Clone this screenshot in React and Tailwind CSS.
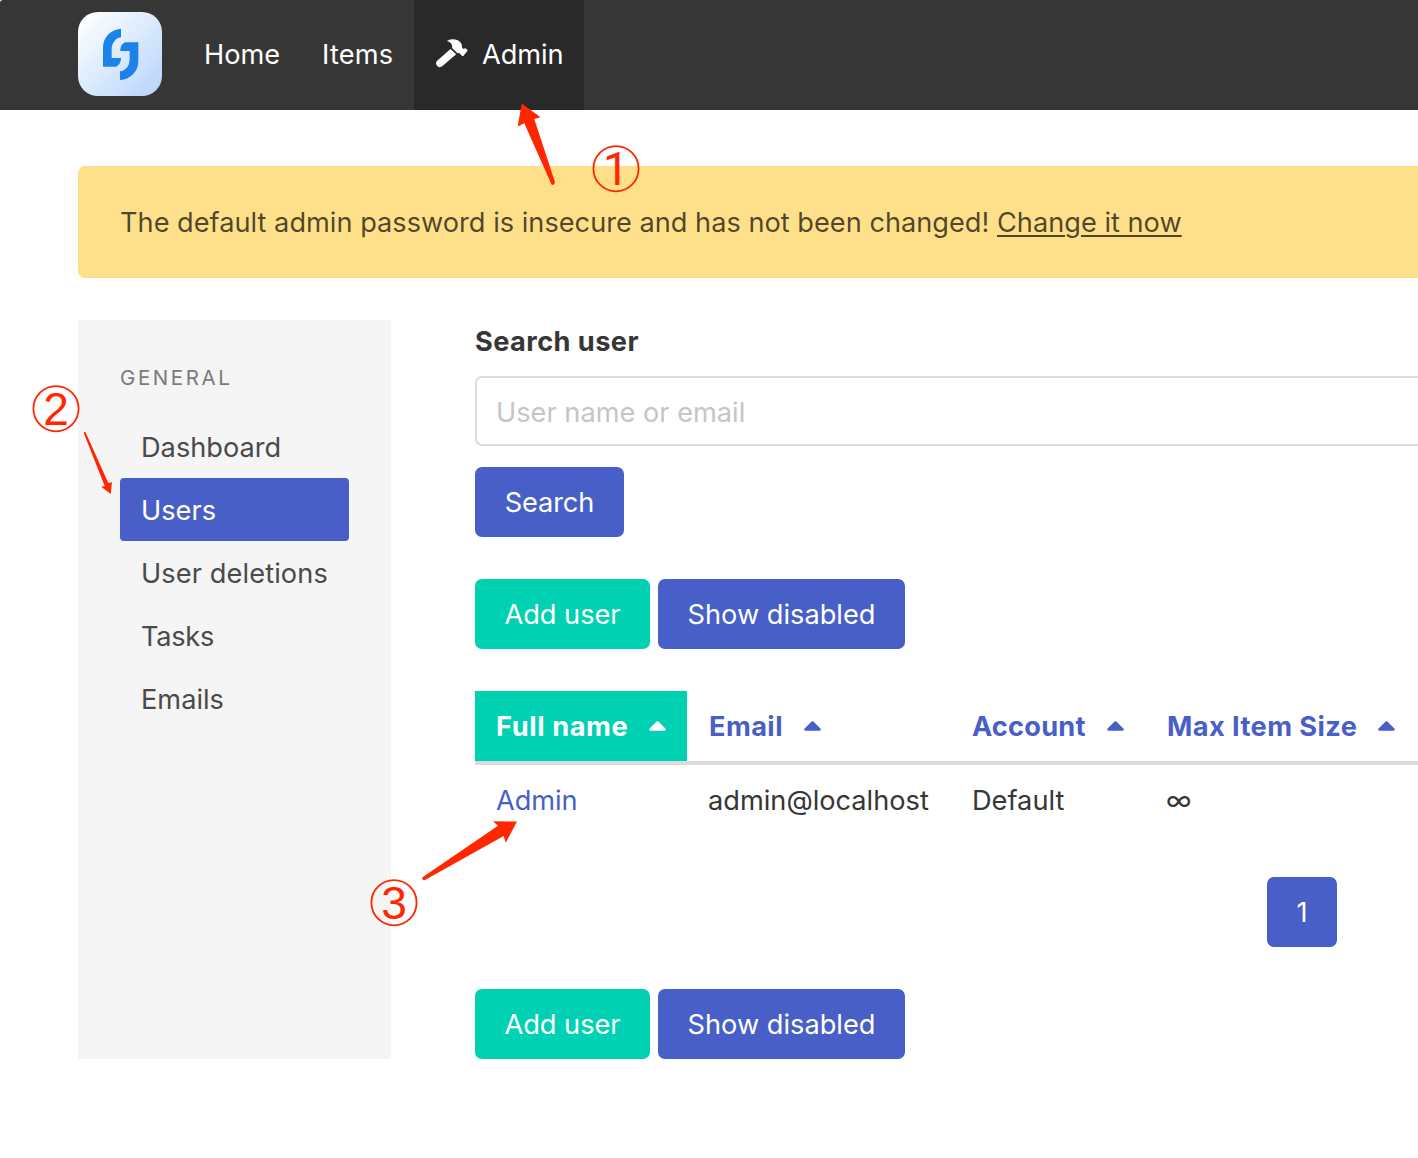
const T = ({ children, className = "" }) => (
  <span className={"whitespace-pre pt-[2px] " + className}>{children}</span>
);

function Logo() {
  return (
    <div className="h-[84px] w-[84px] shrink-0 rounded-[20px] bg-linear-to-br from-white from-5% to-[#b4d3fa]">
      <svg viewBox="0 0 252 252" className="h-full w-full" fill="#1a82e8">
        <path d="M129 50C97 53 75 75 75 108V164H114C122 161 129 152 129 138H101V112C101 95 112 78 129 76Z" />
        <path d="M181 91H143C134 93 127 101 127 117H155V140C155 160 145 176 126 178V204C159 201 181 178 181 146Z" />
      </svg>
    </div>
  );
}

function Hammer() {
  return (
    <svg viewBox="0 0 98 87" className="mb-px mr-[14px] h-[29px] w-[33px]" fill="currentColor">
      <path d="M46 30L63 46L21 82A11.500 11.500 0 0 1 5 66Z" />
      <path d="M36 5C50-2 66 0 75 9C83 17 79 24 82 28Q85 31 89 28Q91 27 93 29L96 32Q98 34 96 37L85 50Q83 52 80 50L76 46Q74 43 71 42L67 43L51 27C52 16 47 9 36 6Z" />
    </svg>
  );
}

function Caret() {
  return (
    <svg viewBox="0 0 17 10" className="h-[10px] w-[17px]" fill="currentColor">
      <path d="M7.600.600a1.300 1.300 0 0 1 1.800 0l7 7c.900.900.300 2.100-.900 2.100h-14C.300 9.700-.300 8.500.600 7.600z" />
    </svg>
  );
}

function Navbar() {
  return (
    <nav className="flex h-[110px] items-stretch rounded-tl-[3px] bg-[#363636] pl-[78px] text-white">
      <div className="mr-[21px] flex items-center pb-[2px]">
        <Logo />
      </div>
      <a className="flex w-[118px] items-center px-[21px] pb-[2px]"><T>Home</T></a>
      <a className="flex w-[113px] items-center px-[21px] pb-[2px]"><T className="tracking-[0.2px]">Items</T></a>
      <a className="flex w-[170px] items-center bg-[#292929] pb-[2px] pl-[21px]">
        <Hammer />
        <T className="tracking-[-0.1px]">Admin</T>
      </a>
    </nav>
  );
}

const menu = [
  { label: "Dashboard", tracking: "" },
  { label: "Users", tracking: "" },
  { label: "User deletions", tracking: "tracking-[0.1px]" },
  { label: "Tasks", tracking: "tracking-[-0.3px]" },
  { label: "Emails", tracking: "" },
];

function Sidebar() {
  return (
    <aside className="h-[739px] w-[313px] shrink-0 bg-[#f5f5f5] px-[42px] pt-[42px]">
      <p className="mb-[21px] text-[20.5px] leading-[32px] tracking-[2.6px] text-[#7a7a7a]">GENERAL</p>
      <ul>
        {menu.map((m) => (
          <li
            key={m.label}
            className={
              "flex h-[63px] items-center rounded-[4px] px-[21px] pt-px " +
              (m.label === "Users" ? "bg-[#485fc7] text-white" : "text-[#4a4a4a]")
            }
          >
            <T className={m.tracking}>{m.label}</T>
          </li>
        ))}
      </ul>
    </aside>
  );
}

function Button({ children, className }) {
  return (
    <button className={"flex h-[70px] items-center justify-center rounded-[7px] text-white " + className}>
      <T>{children}</T>
    </button>
  );
}

function Actions() {
  return (
    <div className="flex gap-2">
      <Button className="w-[175px] bg-[#00d1b2]">Add user</Button>
      <Button className="w-[247px] bg-[#485fc7]">Show disabled</Button>
    </div>
  );
}

const columns = [
  { title: "Full name", value: "Admin", head: "bg-[#00d1b2] text-white pl-[21px] tracking-[0.6px]", cell: "text-[#485fc7] tracking-[-0.1px]" },
  { title: "Email", value: "admin@localhost", head: "text-[#485fc7] pl-[22px] tracking-[0.42px]", cell: "" },
  { title: "Account", value: "Default", head: "text-[#485fc7] pl-[21px] tracking-[0.2px]", cell: "" },
  { title: "Max Item Size", value: "∞", head: "text-[#485fc7] pl-[22px] tracking-[0.42px]", cell: "" },
];

function UserTable() {
  return (
    <div className="mt-[42px]">
      <div className="grid grid-cols-[212px_264px_194px_1fr] border-b-4 border-[#dbdbdb]">
        {columns.map((c) => (
          <div key={c.title} className={"flex h-[70px] items-center gap-[21px] font-bold " + c.head}>
            <T>{c.title}</T>
            <Caret />
          </div>
        ))}
      </div>
      <div className="grid h-[70px] grid-cols-[212px_264px_194px_1fr]">
        {columns.map((c) => (
          <div key={c.title} className={"flex items-center pl-[21px] " + c.cell}>
            <T>{c.value}</T>
          </div>
        ))}
      </div>
    </div>
  );
}

function Marker({ n, className }) {
  return (
    <div className={"absolute flex h-[48px] w-[48px] items-center justify-center text-[46px] leading-none text-[#ff2600] " + className}>
      <svg viewBox="0 0 48 48" className="absolute inset-0" fill="none" stroke="#ff2600" strokeWidth="1.800">
        <circle cx="24" cy="23.700" r="22.600" />
      </svg>
      {n}
    </div>
  );
}

function Annotations() {
  return (
    <>
      <svg className="pointer-events-none absolute inset-0 h-[1158px] w-[1418px]" fill="#ff2600">
        <path d="M521.700 103.500L540.500 117.300L534.300 119L555 182.300Q554.300 186 551.500 184.500L524.300 123.300L517.700 126.500Z" />
        <path d="M110.700 494L112 482.300L108.300 483L85.500 432.300Q84.300 431.300 83.700 433L104.700 486L101.300 486.700Z" />
        <path d="M517 821.500L493 821.300L498 825.700L422.500 877.300Q421.500 880 424.500 880.300L503.700 836L505.700 842.700Z" />
      </svg>
      <Marker n="1" className="left-[592px] top-[145px] font-[Roboto]" />
      <Marker n="2" className="left-[32px] top-[385px] font-['Liberation_Sans']" />
      <Marker n="3" className="left-[370px] top-[879px] font-['Liberation_Sans']" />
    </>
  );
}

export default function App() {
  return (
    <div className="relative h-[1158px] w-[1418px] overflow-hidden bg-white font-[Inter,sans-serif] text-[27.2px] leading-[42px] text-[#363636]">
      <Navbar />
      <div className="pl-[78px] pt-[56px]">
        <div className="flex h-[112px] items-center rounded-l-[7px] bg-[#ffe08a] pl-[42px] text-black/70">
          <T>The default admin password is insecure and has not been changed! </T>
          <T className="underline decoration-2 underline-offset-[3px]">Change it now</T>
        </div>
        <div className="mt-[42px] flex gap-[84px]">
          <Sidebar />
          <main className="min-w-0 flex-1">
            <label className="mb-[13px] block pt-px font-bold tracking-[0.43px]">Search user</label>
            <div className="flex h-[70px] items-center rounded-l-[7px] border-2 border-r-0 border-[#dbdbdb] pl-[19px] text-[#c5c5c5]">
              <T className="mt-[2px]">User name or email</T>
            </div>
            <Button className="mb-[42px] mt-[21px] w-[149px] bg-[#485fc7] tracking-[-0.15px]">Search</Button>
            <Actions />
            <UserTable />
            <div className="mb-[42px] mt-[42px] pl-[792px]">
              <Button className="w-[70px] bg-[#485fc7]">1</Button>
            </div>
            <Actions />
          </main>
        </div>
      </div>
      <Annotations />
    </div>
  );
}
